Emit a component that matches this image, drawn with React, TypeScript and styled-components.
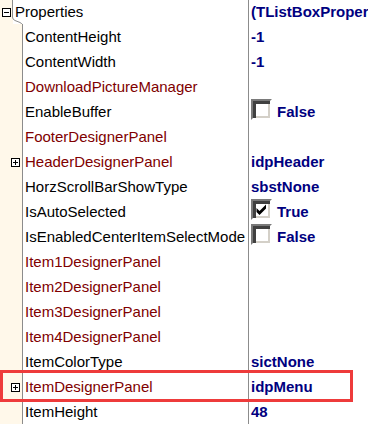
import React from 'react';
import styled, { createGlobalStyle } from 'styled-components';

const GlobalStyle = createGlobalStyle`
  html, body {
    margin: 0;
    padding: 0;
    background: #ffffff;
    overflow: hidden;
  }
`;

type Prop = {
  name: string;
  kind?: 'plain' | 'object';
  value?: string;
  check?: boolean;
  expand?: boolean;
};

const PROPS: Prop[] = [
  { name: 'ContentHeight', value: '-1' },
  { name: 'ContentWidth', value: '-1' },
  { name: 'DownloadPictureManager', kind: 'object' },
  { name: 'EnableBuffer', check: false, value: 'False' },
  { name: 'FooterDesignerPanel', kind: 'object' },
  { name: 'HeaderDesignerPanel', kind: 'object', expand: true, value: 'idpHeader' },
  { name: 'HorzScrollBarShowType', value: 'sbstNone' },
  { name: 'IsAutoSelected', check: true, value: 'True' },
  { name: 'IsEnabledCenterItemSelectMode', check: false, value: 'False' },
  { name: 'Item1DesignerPanel', kind: 'object' },
  { name: 'Item2DesignerPanel', kind: 'object' },
  { name: 'Item3DesignerPanel', kind: 'object' },
  { name: 'Item4DesignerPanel', kind: 'object' },
  { name: 'ItemColorType', value: 'sictNone' },
  { name: 'ItemDesignerPanel', kind: 'object', expand: true, value: 'idpMenu' },
  { name: 'ItemHeight', value: '48' },
];

const Inspector = styled.div`
  position: relative;
  width: 368px;
  height: 425px;
  overflow: hidden;
  font-family: 'Liberation Sans', Arial, sans-serif;
`;

const List = styled.div`
  display: flex;
  flex-direction: column;
  margin-top: -1px;
`;

const Row = styled.div`
  position: relative;
  display: flex;
  height: 25px;
`;

const Gutter = styled.div<{ narrow?: boolean }>`
  position: relative;
  flex: none;
  width: ${p => (p.narrow ? 13 : 23)}px;
  box-sizing: border-box;
  background: #fff8ea;
  border-right: ${p => (p.narrow ? 'none' : '1px solid #8c8c8c')};
`;

const NameCell = styled.div<{ wide?: boolean; tone: 'plain' | 'object' }>`
  flex: none;
  width: ${p => (p.wide ? 236 : 226)}px;
  box-sizing: border-box;
  display: flex;
  align-items: center;
  padding-left: 2px;
  border-right: 1px solid #8c8c8c;
  font-size: 15px;
  white-space: nowrap;
  overflow: hidden;
  color: ${p => (p.tone === 'object' ? '#800000' : '#000000')};
`;

const ValueCell = styled.div`
  flex: 1;
  min-width: 0;
  display: flex;
  align-items: center;
  gap: 5px;
  padding-left: 2px;
  font-size: 15px;
  font-weight: bold;
  color: #000080;
  white-space: nowrap;
  overflow: hidden;
`;

const Expander = styled.div<{ left: number }>`
  position: absolute;
  left: ${p => p.left}px;
  top: 50%;
  margin-top: -4px;
  width: 9px;
  height: 9px;
  box-sizing: border-box;
  border: 1px solid #000;
  background: #fff;
`;

const CheckBox = styled.div`
  align-self: flex-start;
  position: relative;
  flex: none;
  width: 21px;
  height: 21px;
  box-sizing: border-box;
  background: #fff;
  border-top: 2px solid #7a7a7a;
  border-left: 2px solid #7a7a7a;
  border-bottom: 2px solid #ffffff;
  border-right: 2px solid #ffffff;
  box-shadow: inset 3px 3px 0 #404040, inset -2px -2px 0 #d4d0c8;
`;

const Annotation = styled.div`
  position: absolute;
  left: 0;
  top: 370px;
  width: 353px;
  height: 32px;
  box-sizing: border-box;
  border: 3px solid #ee3b3b;
  pointer-events: none;
`;

function Sign({ plus }: { plus?: boolean }) {
  return (
    <svg width="7" height="7" viewBox="0 0 7 7" style={{ display: 'block' }}>
      <path d="M1 3.5H6" stroke="#000" strokeWidth="1" />
      {plus && <path d="M3.5 1V6" stroke="#000" strokeWidth="1" />}
    </svg>
  );
}

function Tick() {
  return (
    <svg width="17" height="17" viewBox="0 0 17 17" style={{ position: 'absolute', left: 0, top: 0 }}>
      <path d="M3.5 7L6.5 10L13 3.5V7.5L6.5 14L3.5 11Z" fill="#000" />
    </svg>
  );
}

const App: React.FC = () => (
  <Inspector>
    <GlobalStyle />
    <List>
      <Row>
        <Gutter narrow>
          <Expander left={2}>
            <Sign />
          </Expander>
          <svg
            width="24"
            height="26"
            viewBox="0 0 24 26"
            style={{ position: 'absolute', left: 0, top: 0, overflow: 'visible' }}
          >
            <path d="M12.5 0V18Q12.5 20.5 15 21.5L20 23.5Q22.5 24.5 22.5 27" stroke="#8c8c8c" fill="none" />
          </svg>
        </Gutter>
        <NameCell wide tone="plain">Properties</NameCell>
        <ValueCell>(TListBoxProperties)</ValueCell>
      </Row>
      {PROPS.map(p => (
        <Row key={p.name}>
          <Gutter>
            {p.expand && (
              <Expander left={11}>
                <Sign plus />
              </Expander>
            )}
          </Gutter>
          <NameCell tone={p.kind ?? 'plain'}>{p.name}</NameCell>
          <ValueCell>
            {p.check !== undefined && <CheckBox>{p.check && <Tick />}</CheckBox>}
            {p.value}
          </ValueCell>
        </Row>
      ))}
    </List>
    <Annotation />
  </Inspector>
);

export default App;
